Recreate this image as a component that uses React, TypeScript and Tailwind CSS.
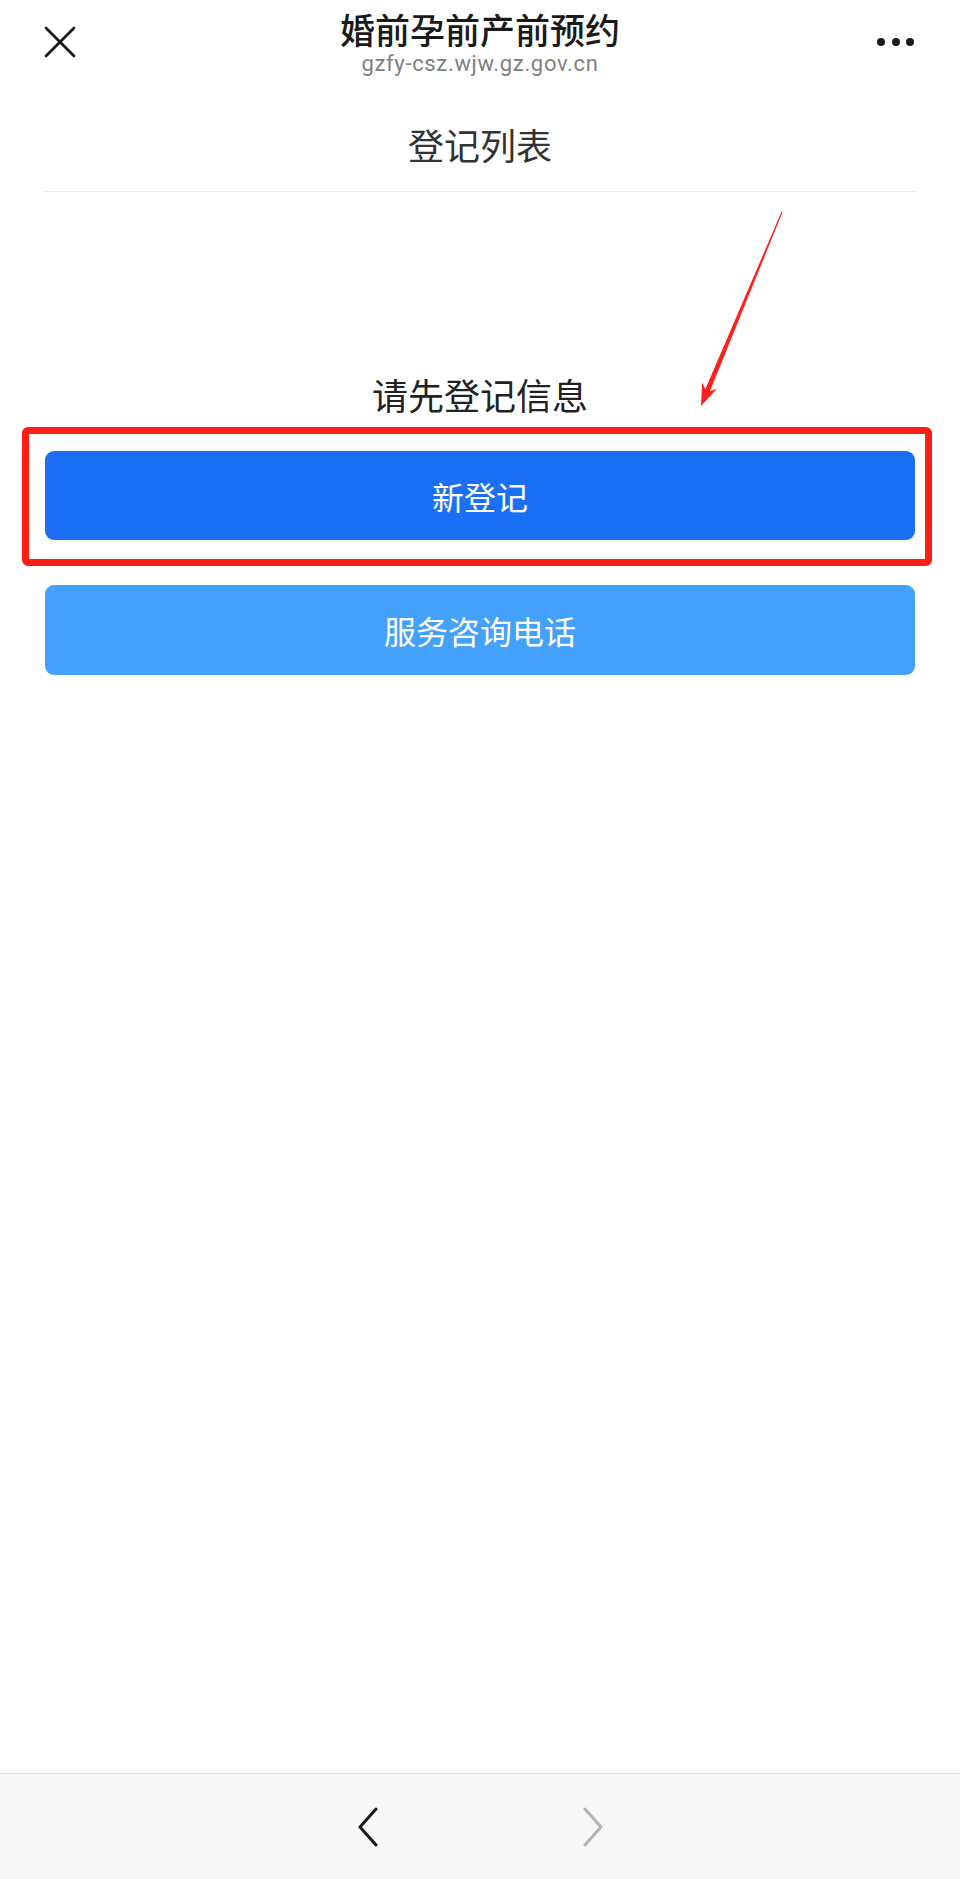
import React from "react"

const cjk = "font-['Noto_Sans_CJK_SC','Noto_Sans',sans-serif]"

function CloseIcon() {
  return (
    <svg width="32" height="32" viewBox="0 0 32 32" fill="none" stroke="#1a1a1a" strokeWidth="2.8" strokeLinecap="round">
      <path d="M2 2 L30 30 M30 2 L2 30" />
    </svg>
  )
}

function MoreIcon() {
  return (
    <div className="flex items-center gap-[6.5px]">
      <span className="block w-[8px] h-[8px] rounded-full bg-[#1a1a1a]" />
      <span className="block w-[8px] h-[8px] rounded-full bg-[#1a1a1a]" />
      <span className="block w-[8px] h-[8px] rounded-full bg-[#1a1a1a]" />
    </div>
  )
}

function Chevron({ dir, color }: { dir: "left" | "right"; color: string }) {
  const d = dir === "left" ? "M20 2 L4 20 L20 38" : "M4 2 L20 20 L4 38"
  return (
    <svg width="24" height="40" viewBox="0 0 24 40" fill="none" stroke={color} strokeWidth="3" strokeLinecap="round" strokeLinejoin="round">
      <path d={d} />
    </svg>
  )
}

export default function App() {
  return (
    <div className={`relative flex flex-col h-[1879px] bg-white ${cjk}`}>
      {/* top bar */}
      <header className="flex items-center h-[84px] px-[44px]">
        <div className="w-[120px] flex items-center">
          <CloseIcon />
        </div>
        <div className="flex-1 flex flex-col items-center">
          <h1 className="text-[35px] leading-[40px] font-medium text-[#1a1a1a]">婚前孕前产前预约</h1>
          <p className="mt-[3px] font-['Roboto','Liberation_Sans',sans-serif] text-[22px] leading-[24px] tracking-[0.03em] text-[#808080]">
            gzfy-csz.wjw.gz.gov.cn
          </p>
        </div>
        <div className="w-[120px] flex justify-end pr-[2px]">
          <MoreIcon />
        </div>
      </header>

      {/* page title */}
      <div className="mx-[44px] pt-[36px] pb-[23px] border-b border-[#eeeeee] text-center">
        <h2 className="text-[36px] leading-[48px] text-[#333333]">登记列表</h2>
      </div>

      <main className="flex-1 flex flex-col">
        <p className="mt-[178px] text-center text-[36px] leading-[48px] text-[#222222]">请先登记信息</p>

        <div className="relative mx-[45px] mt-[33px]">
          <button className="w-full h-[89px] rounded-[9px] bg-[#1b6ff5] text-white text-[32px]">新登记</button>
          <div className="absolute -left-[23px] -right-[17px] -top-[24px] -bottom-[26px] border-[7px] border-[#ff1d14] rounded-[6px] pointer-events-none" />
        </div>

        <div className="mx-[45px] mt-[45px]">
          <button className="w-full h-[90px] rounded-[9px] bg-[#43a1fb] text-white text-[32px]">服务咨询电话</button>
        </div>
      </main>

      {/* annotation arrow */}
      <svg className="absolute left-[690px] top-[205px]" width="100" height="210" viewBox="0 0 100 210">
        <polygon
          points="92.5,7.2 19.9,186.3 26.9,183.8 11,201 12.1,177.6 15.3,184.3 91.5,6.8"
          fill="#ff1f1a"
        />
      </svg>

      {/* bottom toolbar */}
      <footer className="h-[106px] bg-[#f7f7f7] border-t border-[#e2e2e2] flex items-center justify-center gap-[201px]">
        <Chevron dir="left" color="#1a1a1a" />
        <Chevron dir="right" color="#b3b3b3" />
      </footer>
    </div>
  )
}
